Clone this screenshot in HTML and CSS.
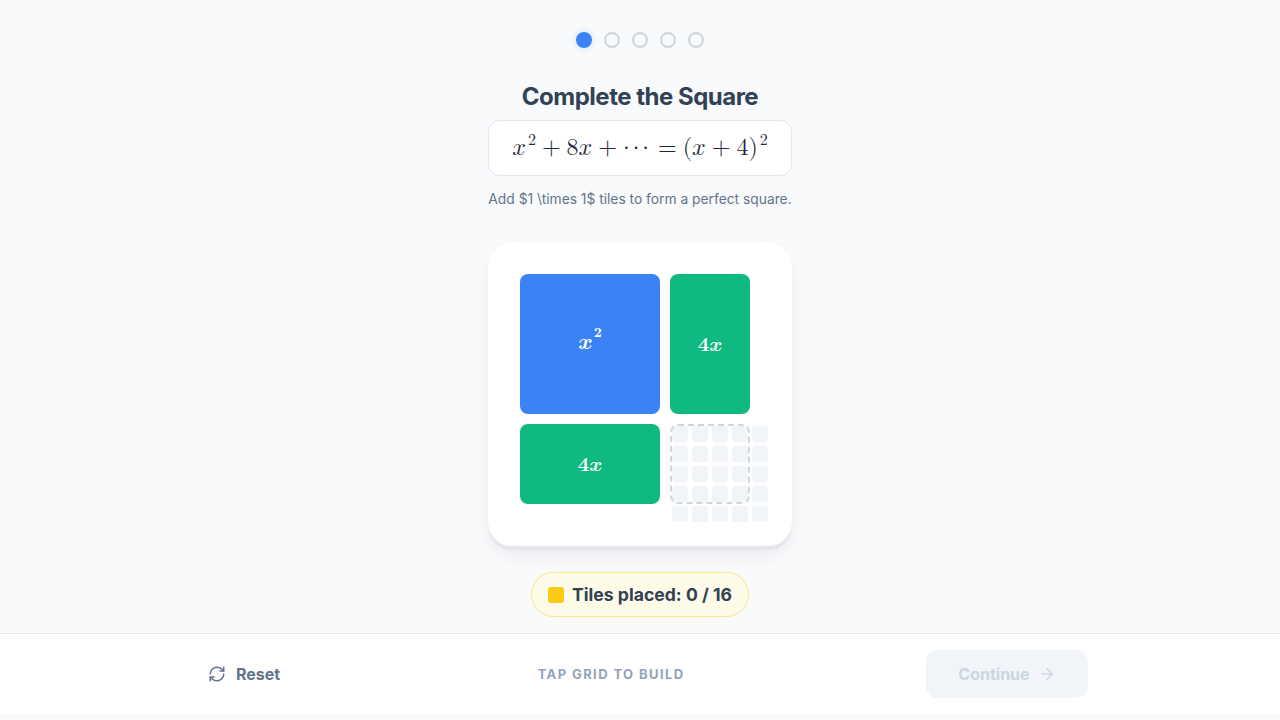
FILE: index.html
```html
<!DOCTYPE html>
<html lang="en">
<head>
<meta charset="utf-8">
<title>Complete the Square</title>
<link rel="stylesheet" href="styles.css">
</head>
<body>
<div class="app">
  <main class="main">
    <div class="dots">
      <span class="dot active"></span>
      <span class="dot"></span>
      <span class="dot"></span>
      <span class="dot"></span>
      <span class="dot"></span>
    </div>
    <h1 class="title">Complete the Square</h1>
    <div class="eq">
      <span class="math"><span class="mi">&#x1D465;</span><sup>2</sup><span class="op">+</span>8<span class="mi">&#x1D465;</span><span class="op">+</span><span class="cdots">&middot;&middot;&middot;</span><span class="op">=</span>(<span class="mi">&#x1D465;</span><span class="op">+</span>4)<sup>2</sup></span>
    </div>
    <p class="sub">Add $1 \times 1$ tiles to form a perfect square.</p>
    <div class="card">
      <div class="board">
        <div class="tile sq"><span class="tlabel">&#x1D499;<sup>&#x1D7D0;</sup></span></div>
        <div class="tile vert"><span class="tlabel">&#x1D7D2;&#x1D499;</span></div>
        <div class="tile horiz"><span class="tlabel">&#x1D7D2;&#x1D499;</span></div>
        <div class="target">
          <div class="cells">
            <span></span><span></span><span></span><span></span><span></span>
            <span></span><span></span><span></span><span></span><span></span>
            <span></span><span></span><span></span><span></span><span></span>
            <span></span><span></span><span></span><span></span><span></span>
            <span></span><span></span><span></span><span></span><span></span>
          </div>
          <div class="outline"></div>
        </div>
      </div>
    </div>
    <div class="badge"><span class="swatch"></span>Tiles placed: 0 / 16</div>
  </main>
  <footer class="footer">
    <div class="footer-inner">
      <button class="reset">
        <svg width="18" height="18" viewBox="0 0 24 24" fill="none" stroke="currentColor" stroke-width="2" stroke-linecap="round" stroke-linejoin="round"><path d="M3 12a9 9 0 0 1 9-9 9.75 9.75 0 0 1 6.74 2.74L21 8"/><path d="M21 3v5h-5"/><path d="M21 12a9 9 0 0 1-9 9 9.75 9.75 0 0 1-6.74-2.74L3 16"/><path d="M8 16H3v5"/></svg>
        Reset
      </button>
      <span class="hint">TAP GRID TO BUILD</span>
      <button class="continue">Continue
        <svg width="18" height="18" viewBox="0 0 24 24" fill="none" stroke="currentColor" stroke-width="2" stroke-linecap="round" stroke-linejoin="round"><path d="M5 12h14"/><path d="m12 5 7 7-7 7"/></svg>
      </button>
    </div>
  </footer>
</div>
</body>
</html>
```
FILE: styles.css
```css
* { box-sizing: border-box; }
html, body { margin: 0; padding: 0; }
body {
  background: #f8fafc;
  font-family: Inter, "Noto Sans", sans-serif;
  color: #334155;
}
.app { display: flex; flex-direction: column; }
.main {
  display: flex;
  flex-direction: column;
  align-items: center;
  padding-top: 32px;
}
.dots { display: flex; gap: 12px; height: 16px; }
.dot {
  width: 16px; height: 16px; border-radius: 50%;
  border: 2px solid #d1d5db;
  background: transparent;
}
.dot.active {
  border: none;
  background: #3b82f6;
  box-shadow: 0 0 0 4px rgba(59,130,246,0.06);
}
.title {
  margin: 33px 0 0;
  font-size: 24px;
  line-height: 32px;
  font-weight: 700;
  color: #334155;
  letter-spacing: -0.5px;
}
.eq {
  margin-top: 7px;
  width: 304px; height: 56px;
  background: #fff;
  border: 1px solid #e2e8f0;
  border-radius: 12px;
  display: flex; align-items: center; justify-content: center;
}
.math {
  font-family: "Latin Modern Math", "Liberation Serif", "DejaVu Serif", serif;
  font-size: 24px;
  color: #1e293b;
  white-space: nowrap;
}
.mi { font-style: normal; }
.math sup { font-size: 16px; vertical-align: 0; position: relative; top: -10px; margin-left: 2px; }
.op { margin: 0 6px; }
.cdots { letter-spacing: 3px; position: relative; top: -1px; }
.sub {
  margin: 13px 0 0;
  font-size: 13.8px;
  line-height: 20px;
  color: #64748b;
}
.card {
  margin-top: 34px;
  width: 304px; height: 303px;
  background: #fff;
  border-radius: 24px;
  padding: 31px 32px;
  box-shadow: 0 4px 0 #e5e7eb, 0 10px 24px -6px rgba(15,23,42,0.10);
}
.board {
  display: grid;
  grid-template-columns: 140px 80px;
  grid-template-rows: 140px 80px;
  gap: 10px;
  width: 240px; height: 240px;
}
.tile {
  border-radius: 8px;
  display: flex; align-items: center; justify-content: center;
  color: #fff;
}
.sq { background: #3b82f6; }
.vert, .horiz { background: #10b981; }
.tlabel {
  font-family: "Latin Modern Math", "Liberation Serif", "DejaVu Serif", serif;
  font-size: 20px;
  white-space: nowrap;
}
.vert .tlabel, .horiz .tlabel { margin-top: 2px; }
.sq .tlabel { margin-top: -4px; font-size: 22px; }
.tlabel sup { font-size: 14px; position: relative; top: -4px; vertical-align: super; margin-left: 1px; }
.target { position: relative; width: 80px; height: 80px; }
.cells {
  position: absolute; left: 2px; top: 2px;
  display: grid;
  grid-template-columns: repeat(5, 16px);
  grid-template-rows: repeat(5, 16px);
  gap: 4px;
}
.cells span { background: #f1f5f9; border-radius: 3px; }
.outline {
  position: absolute; inset: 0;
  border: 2px dashed #d1d5db;
  border-radius: 8px;
}
.badge {
  margin-top: 26px;
  display: flex; align-items: center; gap: 8px;
  height: 45px;
  padding: 0 16px;
  background: #fefce8;
  border: 1px solid #fde68a;
  border-radius: 999px;
  font-size: 17.6px;
  font-weight: 700;
  color: #334155;
}
.swatch { width: 16px; height: 16px; background: #facc15; border-radius: 3px; }
.footer {
  margin-top: 16px;
  margin-bottom: 6px;
  background: #fff;
  border-top: 1px solid #e2e8f0;
  height: 81px;
}
.footer-inner {
  max-width: 896px;
  margin: 0 auto;
  height: 80px;
  display: flex; align-items: center; justify-content: space-between;
}
button { font-family: inherit; border: none; cursor: pointer; }
.reset {
  display: flex; align-items: center; gap: 10px;
  background: transparent;
  padding: 10px 16px;
  font-size: 16px; font-weight: 700;
  color: #64748b;
}
.hint {
  font-size: 13px; font-weight: 700;
  letter-spacing: 1.4px;
  color: #94a3b8;
}
.continue {
  width: 162px; height: 48px;
  display: flex; align-items: center; justify-content: center; gap: 8px;
  background: #f1f5f9;
  border-radius: 12px;
  font-size: 16px; font-weight: 700;
  color: #cbd5e1;
}
```
